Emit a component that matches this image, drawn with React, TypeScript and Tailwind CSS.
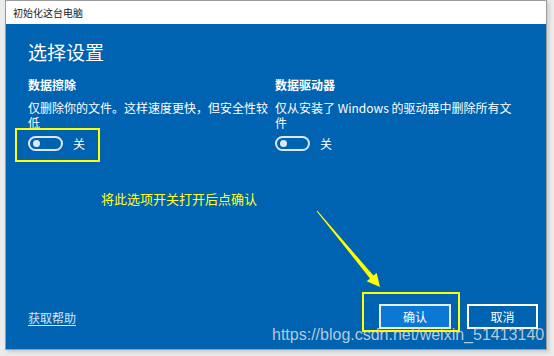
import React from 'react';

const cjk = { fontFamily: '"Noto Sans CJK SC", "Microsoft YaHei", sans-serif' };

const Toggle: React.FC<{ label: string }> = ({ label }) => (
  <div className="flex items-center gap-[10px] mt-[6px]">
    <div className="w-[35px] h-[15px] rounded-full border-2 border-[#dce8f5] flex items-center pl-[3px]">
      <div className="w-[7px] h-[7px] rounded-full bg-[#dce8f5]" />
    </div>
    <span className="text-[12px] leading-[15px] text-white">{label}</span>
  </div>
);

const Option: React.FC<{ title: string; desc: string }> = ({ title, desc }) => (
  <div>
    <div className="text-[12px] leading-[16px] font-bold text-white">{title}</div>
    <p className="mt-[7px] text-[12px] leading-[15px] text-white">{desc}</p>
    <Toggle label="关" />
  </div>
);

export default function App() {
  return (
    <div className="relative w-[554px] h-[356px] bg-[#ececec] overflow-hidden" style={cjk}>
      <div className="ml-[5px] w-[542px] h-[350px] border border-[#9c9c9c] flex flex-col shadow-[2px_2px_4px_rgba(0,0,0,0.15)]">
        <div className="h-[23px] bg-white flex items-center pl-[7px] text-[10px] text-[#1b1b1b]">
          初始化这台电脑
        </div>

        <div className="flex-1 bg-[#0063b1] flex flex-col pl-[22px] pr-[8px] pt-[14px] pb-[20px]">
          <h1 className="text-[19px] leading-[28px] font-normal text-white">选择设置</h1>

          <div className="mt-[11px] grid grid-cols-[247px_247px]">
            <Option title="数据擦除" desc="仅删除你的文件。这样速度更快，但安全性较低" />
            <Option title="数据驱动器" desc="仅从安装了 Windows 的驱动器中删除所有文件" />
          </div>

          <div className="mt-[40px] ml-[73px] text-[13px] leading-[16px] text-[#ffff1a]">
            将此选项开关打开后点确认
          </div>

          <div className="flex-1" />

          <div className="flex items-center justify-between">
            <a className="text-[12px] leading-[16px] text-[#d4e6f7] underline underline-offset-2 mt-[3px]">
              获取帮助
            </a>
            <div className="flex gap-[16px]">
              <button className="w-[72px] h-[25px] bg-[#0a78d4] border-2 border-[#e4eef8] text-white text-[12px]">
                确认
              </button>
              <button className="w-[71px] h-[25px] bg-[#0063b1] border-2 border-white text-white text-[12px]">
                取消
              </button>
            </div>
          </div>
        </div>
      </div>

      {/* annotations */}
      <div className="absolute left-[15px] top-[128px] w-[85px] h-[34px] border-2 border-[#ffff00]" />
      <div className="absolute left-[362px] top-[292px] w-[98px] h-[40px] border-2 border-[#ffff00]" />
      <svg className="absolute inset-0 pointer-events-none" width="554" height="356" viewBox="0 0 554 356">
        <polygon
          fill="#ffff00"
          points="316.6,211.3 370,278.4 366.7,281.2 380,287 376.7,272.9 373.4,275.6 317.4,210.7"
        />
      </svg>
      <div
        className="absolute left-[272px] top-[327px] text-[16px] leading-none text-[#dcdcdc]/85 whitespace-nowrap"
        style={{ fontFamily: '"Liberation Sans", Arial, sans-serif' }}
      >
        https://blog.csdn.net/weixin_51413140
      </div>
    </div>
  );
}
